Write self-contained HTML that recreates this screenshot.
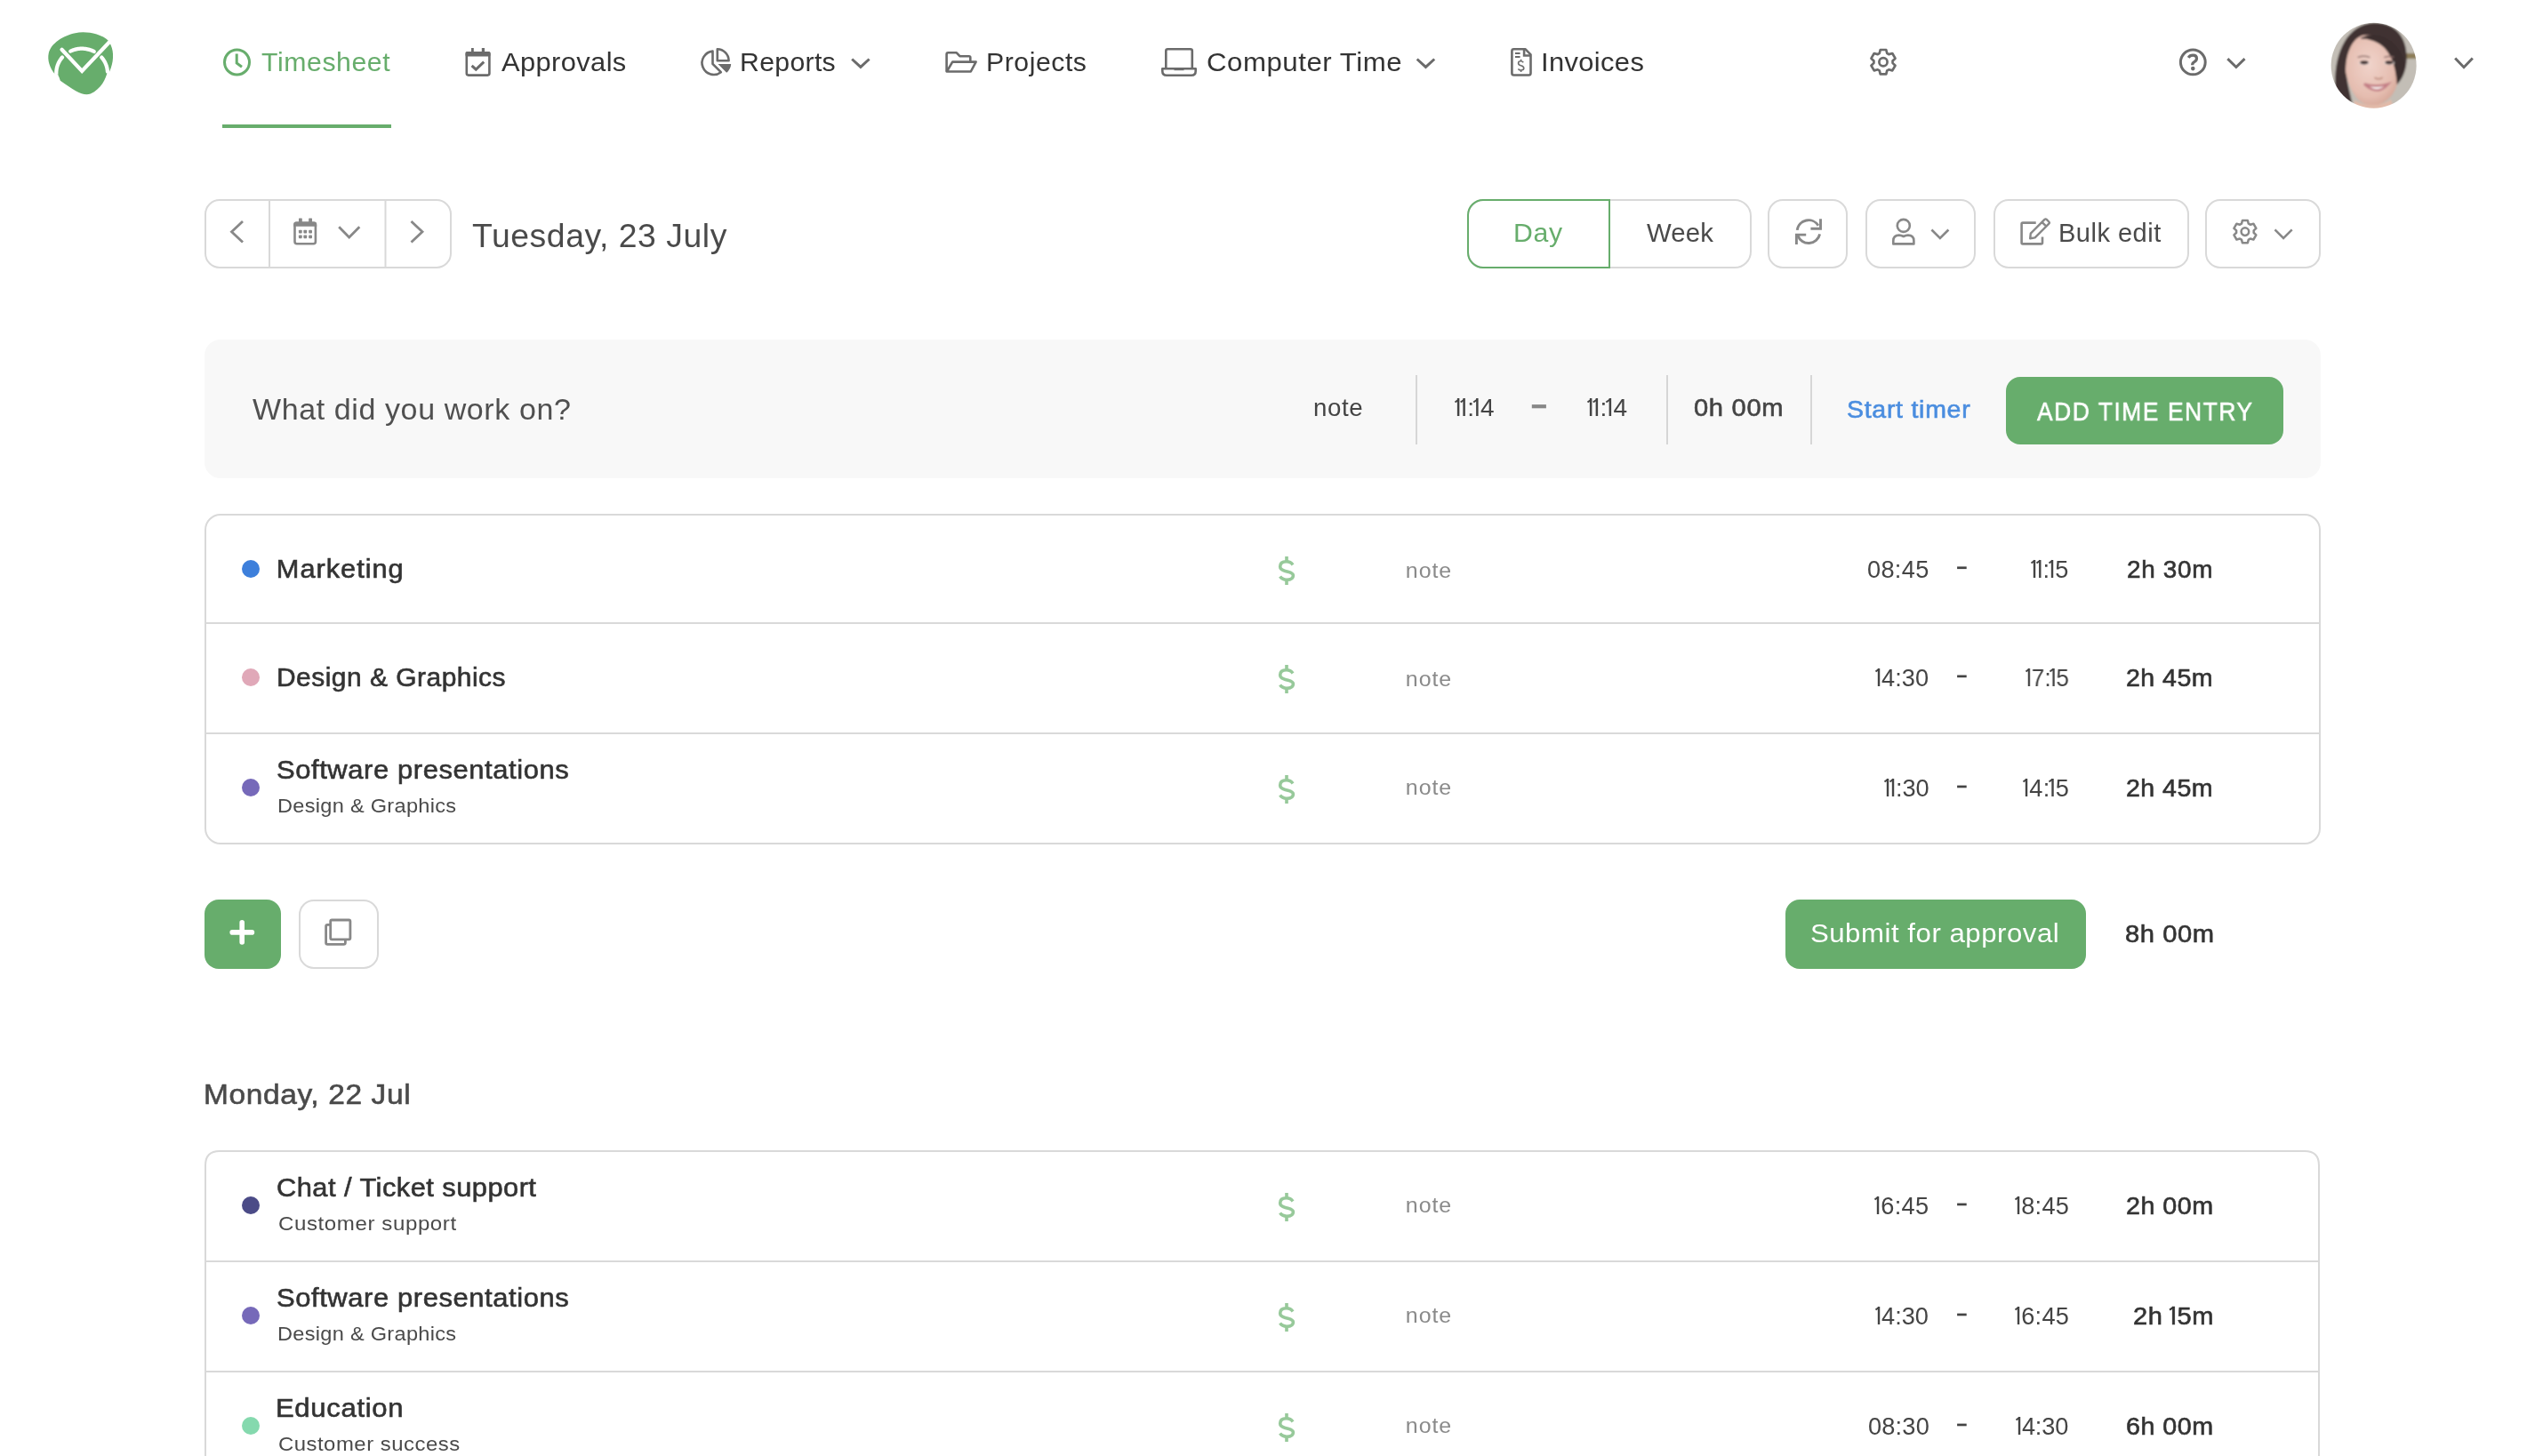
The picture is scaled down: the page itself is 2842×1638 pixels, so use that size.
<!DOCTYPE html>
<html><head><meta charset="utf-8"><title>Timesheet</title>
<style>
html,body{margin:0;padding:0;background:#fff;}
body{width:2842px;height:1638px;position:relative;overflow:hidden;font-family:"Liberation Sans",sans-serif;}
.ov{position:absolute;left:0;top:0;}
.t{position:absolute;white-space:nowrap;will-change:transform;}
.o{position:relative;}.o::after{content:'';position:absolute;left:-0.085em;top:0.185em;width:0.17em;height:0.08em;background:currentColor;transform:rotate(-36deg);transform-origin:100% 0;}
</style></head><body>
<svg class="ov" width="2842" height="1638" viewBox="0 0 2842 1638"><g transform="translate(40,20) scale(0.068681)">
<path d="M330 940 C230 830 190 690 215 580 C250 420 450 290 650 250 C800 220 1050 240 1205 385 L1235 455 C1285 560 1280 740 1210 880 L1178 880 C1150 1000 1080 1160 900 1245 C780 1290 650 1200 405 1030 C385 960 370 935 341 940 Z" fill="#67ad6c"/>
</g>
<g transform="translate(40,20) scale(0.068681)" fill="none" stroke="#fff" stroke-width="62" stroke-linecap="round"><path d="M437.3 647.9 L428.6 658.0 L420.3 668.5 L412.3 679.2 L404.8 690.1 L397.6 701.2 L390.8 712.6 L384.4 724.2 L378.4 736.0 L372.7 747.9 L367.6 760.0 L362.8 772.3 L358.4 784.7 L354.5 797.3 L351.0 809.9 L348.0 822.7 L345.4 835.5 L343.2 848.5 L341.5 861.5 L340.2 874.5 L339.4 887.6 L339.0 900.6 L339.1 913.7 L339.6 926.8 L340.6 939.9"/><path d="M570.9 547.3 L586.1 540.5 L601.4 534.2 L617.1 528.5 L632.9 523.4 L649.0 519.0 L665.2 515.1 L681.6 511.8 L698.1 509.2 L714.7 507.2 L731.4 505.9 L748.1 505.1 L764.9 505.0 L781.6 505.6 L798.3 506.8 L814.9 508.6 L831.5 511.0 L847.9 514.1 L864.2 517.7 L880.3 522.0 L896.2 526.9 L911.9 532.5 L927.4 538.5 L942.6 545.2 L957.5 552.5"/><path d="M1080.7 647.9 L1087.8 656.1 L1094.6 664.5 L1101.2 673.1 L1107.5 681.8 L1113.6 690.7 L1119.5 699.7 L1125.1 708.9 L1130.4 718.2 L1135.5 727.7 L1140.3 737.3 L1144.8 747.0 L1149.1 756.8 L1153.1 766.7 L1156.8 776.7 L1160.2 786.8 L1163.4 797.0 L1166.3 807.2 L1168.8 817.6 L1171.1 828.0 L1173.1 838.4 L1174.8 848.9 L1176.3 859.4 L1177.4 870.0 L1178.2 880.6"/><path d="M430 520 L760 872 L1240 365" stroke-linejoin="miter"/></g>
<circle cx="266.5" cy="70" r="14" fill="none" stroke="#67ad6c" stroke-width="3"/>
<path d="M266.2 60.5 V71 L272 75.2" fill="none" stroke="#67ad6c" stroke-width="3"/>
<rect x="250" y="140" width="190" height="4" fill="#67ad6c"/>
<rect x="524.8" y="59.2" width="25.6" height="25.4" rx="2" fill="none" stroke="#6b6b6b" stroke-width="2.6"/>
<rect x="523.5" y="57.9" width="28" height="5.6" rx="1.5" fill="#6b6b6b"/>
<rect x="530" y="54" width="2.8" height="5" fill="#6b6b6b"/><rect x="541.8" y="54" width="3.2" height="5" fill="#6b6b6b"/>
<path d="M530.6 73.8 L535.3 78.2 L544.2 69.6" fill="none" stroke="#6b6b6b" stroke-width="3"/>
<path d="M801.5 57.6 A13.2 13.2 0 1 0 810.8 81.2 L801.5 71.9 Z" fill="none" stroke="#6b6b6b" stroke-width="2.6" stroke-linejoin="round"/>
<path d="M806.8 55.3 A13 13 0 0 1 819.6 68.2 L806.8 68.2 Z" fill="none" stroke="#6b6b6b" stroke-width="2.6" stroke-linejoin="round"/>
<path d="M807.5 72 L822.2 72 A14.5 14.5 0 0 1 817.2 81.8 Z" fill="#6b6b6b"/>
<path d="M1064.6 80.4 V61 Q1064.6 59.3 1066.3 59.3 H1075.8 L1079.4 63.2 H1089.8 Q1091.3 63.2 1091.3 64.7 V69" fill="none" stroke="#6b6b6b" stroke-width="2.6" stroke-linejoin="round"/>
<path d="M1064.8 80.5 L1071.2 69.6 H1097.6 L1091.8 80.5 Z" fill="none" stroke="#6b6b6b" stroke-width="2.6" stroke-linejoin="round"/>
<path d="M1311.3 77 V57.2 Q1311.3 55.2 1313.3 55.2 H1338.8 Q1340.8 55.2 1340.8 57.2 V77" fill="none" stroke="#6b6b6b" stroke-width="2.6"/>
<path d="M1307.3 77.2 H1344.7 V80 Q1344.7 84.7 1340 84.7 H1312 Q1307.3 84.7 1307.3 80 Z" fill="none" stroke="#6b6b6b" stroke-width="2.6" stroke-linejoin="round"/>
<rect x="1320.5" y="77" width="11" height="2.2" fill="#6b6b6b"/>
<path d="M1715.6 55.3 H1702.5 Q1700.4 55.3 1700.4 57.4 V82.3 Q1700.4 84.5 1702.5 84.5 H1719.4 Q1721.5 84.5 1721.5 82.3 V61.3 Z" fill="none" stroke="#6b6b6b" stroke-width="2.6" stroke-linejoin="round"/>
<path d="M1714.1 55.5 V62.5 H1721.3" fill="none" stroke="#6b6b6b" stroke-width="2.6"/>
<path d="M1704 60 H1709.6 M1704 64 H1709.6" stroke="#6b6b6b" stroke-width="2"/>
<path d="M1713.3 70.3 Q1712 68.8 1710.3 68.8 Q1707.6 68.8 1707.6 71 Q1707.6 73 1710.5 73.8 Q1713.8 74.6 1713.8 76.8 Q1713.8 79 1710.6 79 Q1708.6 79 1707.4 77.4 M1710.6 66.8 V68.8 M1710.6 79 V80.9" fill="none" stroke="#6b6b6b" stroke-width="1.6"/>
<path d="M2113.73 60.00 L2114.73 55.98 L2121.27 55.98 L2122.27 60.00 A10.6 10.6 0 0 1 2124.26 61.15 L2124.26 61.15 L2128.24 60.01 L2131.51 65.67 L2128.54 68.55 A10.6 10.6 0 0 1 2128.54 70.85 L2128.54 70.85 L2131.51 73.73 L2128.24 79.39 L2124.26 78.25 A10.6 10.6 0 0 1 2122.27 79.40 L2122.27 79.40 L2121.27 83.42 L2114.73 83.42 L2113.73 79.40 A10.6 10.6 0 0 1 2111.74 78.25 L2111.74 78.25 L2107.76 79.39 L2104.49 73.73 L2107.46 70.85 A10.6 10.6 0 0 1 2107.46 68.55 L2107.46 68.55 L2104.49 65.67 L2107.76 60.01 L2111.74 61.15 A10.6 10.6 0 0 1 2113.73 60.00 Z" fill="none" stroke="#6b6b6b" stroke-width="2.7" stroke-linejoin="round"/>
<circle cx="2118" cy="69.7" r="4.6" fill="none" stroke="#6b6b6b" stroke-width="2.7"/>
<circle cx="2466.3" cy="69.9" r="13.9" fill="none" stroke="#6b6b6b" stroke-width="3"/>
<path d="M2461.2 64.8 Q2462.8 62.2 2466.3 62.2 Q2470.5 62.2 2470.5 65.8 Q2470.5 68.2 2467.8 69.6 Q2465.6 70.8 2465.6 73.2" fill="none" stroke="#6b6b6b" stroke-width="3.2"/>
<circle cx="2466.3" cy="77.1" r="2.3" fill="#6b6b6b"/>
<path d="M2505.2999999999997 66.2 L2514.8999999999996 75.5 L2524.5 66.2" fill="none" stroke="#6b6b6b" stroke-width="3" stroke-linecap="butt" stroke-linejoin="miter"/>
<path d="M958.2 66.5 L967.9 75.4 L977.5999999999999 66.5" fill="none" stroke="#6b6b6b" stroke-width="3" stroke-linecap="butt" stroke-linejoin="miter"/>
<path d="M1593.7 66.5 L1603.45 75.4 L1613.2 66.5" fill="none" stroke="#6b6b6b" stroke-width="3" stroke-linecap="butt" stroke-linejoin="miter"/>
<path d="M2761.2 65.5 L2771.0 75.7 L2780.8 65.5" fill="none" stroke="#6b6b6b" stroke-width="3" stroke-linecap="butt" stroke-linejoin="miter"/>
<defs><clipPath id="av"><circle cx="749" cy="725" r="624"/></clipPath>
<filter id="blr" x="-10%" y="-10%" width="120%" height="120%"><feGaussianBlur stdDeviation="12"/></filter>
<radialGradient id="sk" cx="0.45" cy="0.42" r="0.65"><stop offset="0" stop-color="#f0d3ca"/><stop offset="0.7" stop-color="#e5bdb0"/><stop offset="1" stop-color="#d3a394"/></radialGradient></defs>
<g transform="translate(2612,18) scale(0.076923)"><g clip-path="url(#av)"><g filter="url(#blr)">
<rect x="50" y="50" width="1400" height="1400" fill="#c3beb6"/>
<rect x="1190" y="545" width="250" height="80" fill="#8d7d58"/>
<path d="M190 1100 C150 600 330 130 740 100 C1080 85 1250 330 1230 650 C1220 820 1160 930 1090 1000 L1080 700 C1000 450 800 330 560 320 C420 420 340 620 350 850 C370 1050 430 1200 460 1420 L230 1420 C210 1300 200 1200 190 1100 Z" fill="#3f3131"/>
<path d="M340 830 C330 520 460 290 620 280 C860 265 1040 420 1100 640 C1130 820 1120 1010 1020 1150 C920 1275 810 1315 705 1305 C540 1290 420 1160 340 830 Z" fill="url(#sk)"/>
<path d="M470 1230 C600 1330 860 1330 1000 1220 L1060 1420 L450 1420 Z" fill="#e2baa9"/>
<path d="M560 320 C820 200 1090 360 1180 620 C1220 800 1160 920 1090 1000 C1075 820 1045 620 910 470 C810 370 680 330 560 330 Z" fill="#3a2d2e"/>
<path d="M515 605 Q600 570 695 605" stroke="#8a6a66" stroke-width="18" fill="none"/>
<path d="M900 605 Q975 578 1045 605" stroke="#8a6a66" stroke-width="18" fill="none"/>
<ellipse cx="610" cy="685" rx="78" ry="30" fill="#f1e6e4"/><ellipse cx="975" cy="685" rx="76" ry="30" fill="#f1e6e4"/>
<ellipse cx="610" cy="680" rx="62" ry="28" fill="#3a2a2a"/><ellipse cx="975" cy="680" rx="60" ry="28" fill="#3a2a2a"/>
<path d="M760 900 Q820 940 880 900" stroke="#c08f80" stroke-width="22" fill="none"/>
<path d="M610 995 Q790 1050 960 995 Q800 1175 610 995 Z" fill="#fbf5f3" stroke="#c47f86" stroke-width="34"/>
</g></g></g>
<rect x="231.0" y="225.0" width="276" height="76" rx="16" fill="none" stroke="#d9d9d9" stroke-width="2"/>
<rect x="302" y="225" width="2" height="76" fill="#d9d9d9"/><rect x="432.5" y="225" width="2" height="76" fill="#d9d9d9"/>
<path d="M273 249 L260.5 260.8 L273 272.6" fill="none" stroke="#888888" stroke-width="2.8"/>
<path d="M462.5 249 L475 260.8 L462.5 272.6" fill="none" stroke="#888888" stroke-width="2.8"/>
<rect x="331.5" y="250.8" width="23.4" height="23.5" rx="2.5" fill="none" stroke="#888888" stroke-width="2.6"/><path d="M330.2 254.8 V252 Q330.2 249.5 332.7 249.5 H353.7 Q356.2 249.5 356.2 252 V254.8 Z" fill="#888888"/>
<rect x="336" y="245.5" width="3.8" height="5" rx="0.6" fill="#888888"/><rect x="347.2" y="245.5" width="3.8" height="5" rx="0.6" fill="#888888"/>
<rect x="335.90000000000003" y="258.70000000000005" width="3.8" height="3.8" rx="0.9" fill="#888888"/>
<rect x="335.90000000000003" y="264.40000000000003" width="3.8" height="3.8" rx="0.9" fill="#888888"/>
<rect x="341.40000000000003" y="258.70000000000005" width="3.8" height="3.8" rx="0.9" fill="#888888"/>
<rect x="341.40000000000003" y="264.40000000000003" width="3.8" height="3.8" rx="0.9" fill="#888888"/>
<rect x="347.20000000000005" y="258.70000000000005" width="3.8" height="3.8" rx="0.9" fill="#888888"/>
<rect x="347.20000000000005" y="264.40000000000003" width="3.8" height="3.8" rx="0.9" fill="#888888"/>
<path d="M381.2 255.2 L392.7 267 L404.3 255.2" fill="none" stroke="#888888" stroke-width="2.8"/>
<rect x="1651.0" y="225.0" width="318" height="76" rx="18" fill="none" stroke="#d9d9d9" stroke-width="2"/>
<path d="M1810 225 H1668 A17 17 0 0 0 1651 242 V284 A17 17 0 0 0 1668 301 H1810 Z" fill="none" stroke="#67ad6c" stroke-width="2"/>
<rect x="1989.0" y="225.0" width="88" height="76" rx="16" fill="none" stroke="#d9d9d9" stroke-width="2"/>
<path d="M2021.23 258.85 A12.9 12.9 0 0 1 2044.94 253.81" fill="none" stroke="#888888" stroke-width="2.9"/>
<path d="M2047.5 246.2 V257.3 H2036.4" fill="none" stroke="#888888" stroke-width="2.9"/>
<path d="M2046.62 263.33 A12.9 12.9 0 0 1 2021.88 265.06" fill="none" stroke="#888888" stroke-width="2.9"/>
<path d="M2020.4 275 V264.1 H2031.2" fill="none" stroke="#888888" stroke-width="2.9"/>
<rect x="2099.0" y="225.0" width="122" height="76" rx="16" fill="none" stroke="#d9d9d9" stroke-width="2"/>
<circle cx="2140.8" cy="253.9" r="7" fill="none" stroke="#888888" stroke-width="2.6"/>
<path d="M2129.3 274.4 V271 Q2129.3 264.6 2135.8 264.6 Q2138.3 264.6 2140.8 266 Q2143.3 264.6 2145.8 264.6 Q2152.4 264.6 2152.4 271 V274.4 Z" fill="none" stroke="#888888" stroke-width="2.6" stroke-linejoin="round"/>
<path d="M2172.4 258.5 L2181.9 268 L2191.4 258.5" fill="none" stroke="#888888" stroke-width="2.6"/>
<rect x="2243.0" y="225.0" width="218" height="76" rx="16" fill="none" stroke="#d9d9d9" stroke-width="2"/>
<path d="M2289.7 250.6 H2275 Q2273.6 250.6 2273.6 252 V273 Q2273.6 274.4 2275 274.4 H2295.6 Q2297 274.4 2297 273 V266.5" fill="none" stroke="#888888" stroke-width="2.6"/>
<path d="M2283.8 262.6 L2299.5 246.9 Q2300.6 245.8 2301.7 246.9 L2304.3 249.5 Q2305.4 250.6 2304.3 251.7 L2288.6 267.4 L2283.2 268.2 Z M2296.5 249.9 L2301.3 254.7" fill="none" stroke="#888888" stroke-width="2.4" stroke-linejoin="round"/>
<rect x="2481.0" y="225.0" width="128" height="76" rx="16" fill="none" stroke="#d9d9d9" stroke-width="2"/>
<path d="M2521.01 251.61 L2521.93 247.94 L2527.87 247.94 L2528.79 251.61 A9.8 9.8 0 0 1 2530.74 252.73 L2530.74 252.73 L2534.37 251.70 L2537.35 256.85 L2534.63 259.47 A9.8 9.8 0 0 1 2534.63 261.73 L2534.63 261.73 L2537.35 264.35 L2534.37 269.50 L2530.74 268.47 A9.8 9.8 0 0 1 2528.79 269.59 L2528.79 269.59 L2527.87 273.26 L2521.93 273.26 L2521.01 269.59 A9.8 9.8 0 0 1 2519.06 268.47 L2519.06 268.47 L2515.43 269.50 L2512.45 264.35 L2515.17 261.73 A9.8 9.8 0 0 1 2515.17 259.47 L2515.17 259.47 L2512.45 256.85 L2515.43 251.70 L2519.06 252.73 A9.8 9.8 0 0 1 2521.01 251.61 Z" fill="none" stroke="#888888" stroke-width="2.5" stroke-linejoin="round"/>
<circle cx="2524.9" cy="260.6" r="4.3" fill="none" stroke="#888888" stroke-width="2.5"/>
<path d="M2558.5 258.3 L2568.1 267.9 L2577.7 258.3" fill="none" stroke="#888888" stroke-width="2.6"/>
<rect x="230" y="382" width="2380" height="156" rx="18" fill="#f8f8f8"/>
<rect x="1592" y="422" width="2" height="78" fill="#d6d6d6"/>
<rect x="1874" y="422" width="2" height="78" fill="#d6d6d6"/>
<rect x="2036" y="422" width="2" height="78" fill="#d6d6d6"/>
<rect x="1722.8" y="455.1" width="16.1" height="4.2" fill="#888"/>
<rect x="2256" y="424" width="312" height="76" rx="16" fill="#67ad6c"/>
<rect x="231.0" y="579.0" width="2378" height="370" rx="17" fill="none" stroke="#d9d9d9" stroke-width="2"/>
<rect x="231" y="700" width="2378" height="2" fill="#d9d9d9"/>
<rect x="231" y="824" width="2378" height="2" fill="#d9d9d9"/>
<circle cx="282" cy="640.0" r="10" fill="#3d7fdb"/>
<path d="M1454 635.4 Q1451.6 631.8 1446.8 631.8 Q1439.7 631.8 1439.7 637.4 Q1439.7 640.8 1445.5 642.4 L1448.5 643.2 Q1454.4 644.8 1454.4 647.4 Q1454.4 652.2 1447 652.2 Q1442 652.2 1439.6 648.6" fill="none" stroke="#97c99a" stroke-width="3.6"/>
<rect x="1445.2" y="626.0" width="3.6" height="6" fill="#97c99a"/><rect x="1445.2" y="652.0" width="3.6" height="6" fill="#97c99a"/>
<circle cx="282" cy="762.0" r="10" fill="#e0a8b8"/>
<path d="M1454 757.4 Q1451.6 753.8 1446.8 753.8 Q1439.7 753.8 1439.7 759.4 Q1439.7 762.8 1445.5 764.4 L1448.5 765.2 Q1454.4 766.8 1454.4 769.4 Q1454.4 774.2 1447 774.2 Q1442 774.2 1439.6 770.6" fill="none" stroke="#97c99a" stroke-width="3.6"/>
<rect x="1445.2" y="748.0" width="3.6" height="6" fill="#97c99a"/><rect x="1445.2" y="774.0" width="3.6" height="6" fill="#97c99a"/>
<circle cx="282" cy="886.0" r="10" fill="#7669b9"/>
<path d="M1454 881.4 Q1451.6 877.8 1446.8 877.8 Q1439.7 877.8 1439.7 883.4 Q1439.7 886.8 1445.5 888.4 L1448.5 889.2 Q1454.4 890.8 1454.4 893.4 Q1454.4 898.2 1447 898.2 Q1442 898.2 1439.6 894.6" fill="none" stroke="#97c99a" stroke-width="3.6"/>
<rect x="1445.2" y="872.0" width="3.6" height="6" fill="#97c99a"/><rect x="1445.2" y="898.0" width="3.6" height="6" fill="#97c99a"/>
<rect x="2201.1" y="637.4" width="10.6" height="2.7" fill="#444"/>
<rect x="2201.1" y="759.5" width="10.6" height="2.7" fill="#444"/>
<rect x="2201.1" y="883.6" width="10.6" height="2.7" fill="#444"/>
<path d="M231 1640 V1311 Q231 1295 247 1295 H2592 Q2608 1295 2608 1311 V1640" fill="none" stroke="#d9d9d9" stroke-width="2"/>
<rect x="231" y="1418" width="2378" height="2" fill="#d9d9d9"/>
<rect x="231" y="1542" width="2378" height="2" fill="#d9d9d9"/>
<circle cx="282" cy="1356.0" r="10" fill="#4b4b87"/>
<path d="M1454 1351.4 Q1451.6 1347.8 1446.8 1347.8 Q1439.7 1347.8 1439.7 1353.4 Q1439.7 1356.8 1445.5 1358.4 L1448.5 1359.2 Q1454.4 1360.8 1454.4 1363.4 Q1454.4 1368.2 1447 1368.2 Q1442 1368.2 1439.6 1364.6" fill="none" stroke="#97c99a" stroke-width="3.6"/>
<rect x="1445.2" y="1342.0" width="3.6" height="6" fill="#97c99a"/><rect x="1445.2" y="1368.0" width="3.6" height="6" fill="#97c99a"/>
<circle cx="282" cy="1480.0" r="10" fill="#7669b9"/>
<path d="M1454 1475.4 Q1451.6 1471.8 1446.8 1471.8 Q1439.7 1471.8 1439.7 1477.4 Q1439.7 1480.8 1445.5 1482.4 L1448.5 1483.2 Q1454.4 1484.8 1454.4 1487.4 Q1454.4 1492.2 1447 1492.2 Q1442 1492.2 1439.6 1488.6" fill="none" stroke="#97c99a" stroke-width="3.6"/>
<rect x="1445.2" y="1466.0" width="3.6" height="6" fill="#97c99a"/><rect x="1445.2" y="1492.0" width="3.6" height="6" fill="#97c99a"/>
<circle cx="282" cy="1604.0" r="10" fill="#85d9ae"/>
<path d="M1454 1599.4 Q1451.6 1595.8 1446.8 1595.8 Q1439.7 1595.8 1439.7 1601.4 Q1439.7 1604.8 1445.5 1606.4 L1448.5 1607.2 Q1454.4 1608.8 1454.4 1611.4 Q1454.4 1616.2 1447 1616.2 Q1442 1616.2 1439.6 1612.6" fill="none" stroke="#97c99a" stroke-width="3.6"/>
<rect x="1445.2" y="1590.0" width="3.6" height="6" fill="#97c99a"/><rect x="1445.2" y="1616.0" width="3.6" height="6" fill="#97c99a"/>
<rect x="2201.1" y="1353.6" width="10.6" height="2.7" fill="#444"/>
<rect x="2201.1" y="1477.6" width="10.6" height="2.7" fill="#444"/>
<rect x="2201.1" y="1601.6" width="10.6" height="2.7" fill="#444"/>
<rect x="230" y="1012" width="86" height="78" rx="16" fill="#67ad6c"/>
<path d="M272.2 1037.8 V1060 M261.2 1048.9 H283.4" stroke="#fff" stroke-width="5.6" stroke-linecap="round"/>
<rect x="337.0" y="1013.0" width="88" height="76" rx="16" fill="none" stroke="#d9d9d9" stroke-width="2"/>
<rect x="371.7" y="1035" width="22.2" height="21.8" rx="1.5" fill="none" stroke="#888888" stroke-width="2.8"/>
<path d="M371.5 1040.4 H368.4 Q366.6 1040.4 366.6 1042.2 V1060.6 Q366.6 1062.4 368.4 1062.4 H386.6 Q388.4 1062.4 388.4 1060.6 V1057.6" fill="none" stroke="#888888" stroke-width="2.8"/>
<rect x="2008" y="1012" width="338" height="78" rx="16" fill="#67ad6c"/></svg>
<div class="t" style="left:293.80px;top:54.90px;font-size:30.233px;line-height:30.233px;letter-spacing:0.587px;color:#67ad6c">Timesheet</div><div class="t" style="left:564.30px;top:54.90px;font-size:30.233px;line-height:30.233px;letter-spacing:0.361px;color:#333333;transform:scaleX(1.0222);transform-origin:0.00px 0">Approvals</div><div class="t" style="left:832.40px;top:54.90px;font-size:30.233px;line-height:30.233px;letter-spacing:0.317px;color:#333333">Reports</div><div class="t" style="left:1109.20px;top:54.90px;font-size:30.233px;line-height:30.233px;letter-spacing:0.543px;color:#333333">Projects</div><div class="t" style="left:1356.70px;top:54.90px;font-size:30.233px;line-height:30.233px;letter-spacing:0.525px;color:#333333;transform:scaleX(1.0320);transform-origin:2.00px 0">Computer Time</div><div class="t" style="left:1732.80px;top:54.90px;font-size:30.233px;line-height:30.233px;letter-spacing:0.349px;color:#333333;transform:scaleX(1.0234);transform-origin:3.00px 0">Invoices</div><div class="t" style="left:530.70px;top:247.15px;font-size:37.355px;line-height:37.355px;letter-spacing:0.547px;color:#4a4a4a">Tuesday, 23 July</div><div class="t" style="left:1701.90px;top:247.10px;font-size:29.361px;line-height:29.361px;letter-spacing:0.705px;color:#67ad6c;transform:scaleX(1.0290);transform-origin:2.00px 0">Day</div><div class="t" style="left:1851.90px;top:247.10px;font-size:29.361px;line-height:29.361px;letter-spacing:0.133px;color:#4a4a4a">Week</div><div class="t" style="left:2315.20px;top:247.90px;font-size:29.070px;line-height:29.070px;letter-spacing:0.475px;color:#4a4a4a">Bulk edit</div><div class="t" style="left:284.20px;top:443.20px;font-size:34.012px;line-height:34.012px;letter-spacing:0.600px;color:#505050">What did you work on?</div><div class="t" style="left:1476.70px;top:445.00px;font-size:27.635px;line-height:27.635px;letter-spacing:0.600px;color:#444444">note</div><div class="t" style="left:1637.20px;top:446.05px;font-size:26.890px;line-height:26.890px;letter-spacing:0.373px;color:#444444;transform:scaleX(1.0378);transform-origin:-1.00px 0"><span class="o">l</span><span class="o">l</span>:<span class="o">l</span>4</div><div class="t" style="left:1786.30px;top:446.05px;font-size:26.890px;line-height:26.890px;letter-spacing:0.443px;color:#444444;transform:scaleX(1.0451);transform-origin:-1.00px 0"><span class="o">l</span><span class="o">l</span>:<span class="o">l</span>4</div><div class="t" style="left:1905.00px;top:445.15px;font-size:28.053px;line-height:28.053px;letter-spacing:0.674px;color:#444444;-webkit-text-stroke:0.6px #444444;transform:scaleX(1.0385);transform-origin:1.00px 0">0h 00m</div><div class="t" style="left:2077.10px;top:448.35px;font-size:26.890px;line-height:26.890px;letter-spacing:0.694px;color:#4a8ddf;-webkit-text-stroke:0.6px #4a8ddf;transform:scaleX(1.0598);transform-origin:1.00px 0">Start timer</div><div class="t" style="left:2290.90px;top:447.50px;font-size:29.942px;line-height:29.942px;letter-spacing:1.794px;color:#ffffff;-webkit-text-stroke:0.6px #ffffff;transform:scaleX(0.8800);transform-origin:0.00px 0">ADD TIME ENTRY</div><div class="t" style="left:310.80px;top:626.15px;font-size:28.925px;line-height:28.925px;letter-spacing:0.917px;color:#333333;-webkit-text-stroke:0.6px #333333;transform:scaleX(1.0634);transform-origin:2.00px 0">Marketing</div><div class="t" style="left:1580.60px;top:631.20px;font-size:23.471px;line-height:23.471px;letter-spacing:0.847px;color:#8a8a8a;transform:scaleX(1.0628);transform-origin:2.00px 0">note</div><div class="t" style="left:2100.00px;top:627.05px;font-size:27.181px;line-height:27.181px;letter-spacing:0.325px;color:#444444">08:45</div><div class="t" style="left:2285.20px;top:627.05px;font-size:27.181px;line-height:27.181px;letter-spacing:0.150px;color:#444444"><span class="o">l</span><span class="o">l</span>:<span class="o">l</span>5</div><div class="t" style="left:2392.10px;top:626.80px;font-size:27.907px;line-height:27.907px;letter-spacing:0.700px;color:#333333;-webkit-text-stroke:0.6px #333333">2h 30m</div><div class="t" style="left:310.80px;top:748.25px;font-size:28.925px;line-height:28.925px;letter-spacing:0.498px;color:#333333;-webkit-text-stroke:0.6px #333333;transform:scaleX(1.0347);transform-origin:2.00px 0">Design &amp; Graphics</div><div class="t" style="left:1580.60px;top:753.30px;font-size:23.471px;line-height:23.471px;letter-spacing:0.847px;color:#8a8a8a;transform:scaleX(1.0628);transform-origin:2.00px 0">note</div><div class="t" style="left:2110.20px;top:749.15px;font-size:27.181px;line-height:27.181px;letter-spacing:0.025px;color:#444444"><span class="o">l</span>4:30</div><div class="t" style="left:2278.70px;top:749.15px;font-size:27.181px;line-height:27.181px;letter-spacing:0.000px;color:#444444;transform:scaleX(0.9620);transform-origin:-1.00px 0"><span class="o">l</span>7:<span class="o">l</span>5</div><div class="t" style="left:2391.00px;top:748.90px;font-size:27.907px;line-height:27.907px;letter-spacing:0.449px;color:#333333;-webkit-text-stroke:0.6px #333333;transform:scaleX(1.0253);transform-origin:1.00px 0">2h 45m</div><div class="t" style="left:310.90px;top:851.05px;font-size:29.797px;line-height:29.797px;letter-spacing:0.554px;color:#333333;-webkit-text-stroke:0.6px #333333;transform:scaleX(1.0399);transform-origin:1.00px 0">Software presentations</div><div class="t" style="left:312.10px;top:894.70px;font-size:22.966px;line-height:22.966px;letter-spacing:0.296px;color:#4a4a4a;transform:scaleX(1.0257);transform-origin:2.00px 0">Design &amp; Graphics</div><div class="t" style="left:1580.60px;top:875.00px;font-size:23.471px;line-height:23.471px;letter-spacing:0.847px;color:#8a8a8a;transform:scaleX(1.0628);transform-origin:2.00px 0">note</div><div class="t" style="left:2119.50px;top:873.25px;font-size:27.181px;line-height:27.181px;letter-spacing:-0.050px;color:#444444"><span class="o">l</span><span class="o">l</span>:30</div><div class="t" style="left:2275.80px;top:873.25px;font-size:27.181px;line-height:27.181px;letter-spacing:0.250px;color:#444444"><span class="o">l</span>4:<span class="o">l</span>5</div><div class="t" style="left:2391.00px;top:873.00px;font-size:27.907px;line-height:27.907px;letter-spacing:0.449px;color:#333333;-webkit-text-stroke:0.6px #333333;transform:scaleX(1.0253);transform-origin:1.00px 0">2h 45m</div><div class="t" style="left:2036.00px;top:1035.15px;font-size:30.088px;line-height:30.088px;letter-spacing:0.506px;color:#ffffff;transform:scaleX(1.0368);transform-origin:2.00px 0">Submit for approval</div><div class="t" style="left:2389.60px;top:1036.25px;font-size:28.344px;line-height:28.344px;letter-spacing:0.525px;color:#333333;-webkit-text-stroke:0.6px #333333;transform:scaleX(1.0293);transform-origin:1.00px 0">8h 00m</div><div class="t" style="left:228.90px;top:1214.70px;font-size:32.268px;line-height:32.268px;letter-spacing:0.604px;color:#4a4a4a;-webkit-text-stroke:0.6px #4a4a4a;transform:scaleX(1.0383);transform-origin:2.00px 0">Monday, 22 Jul</div><div class="t" style="left:310.90px;top:1321.05px;font-size:29.797px;line-height:29.797px;letter-spacing:0.454px;color:#333333;-webkit-text-stroke:0.6px #333333;transform:scaleX(1.0346);transform-origin:1.00px 0">Chat / Ticket support</div><div class="t" style="left:313.10px;top:1364.70px;font-size:22.966px;line-height:22.966px;letter-spacing:0.562px;color:#4a4a4a;transform:scaleX(1.0489);transform-origin:1.00px 0">Customer support</div><div class="t" style="left:1580.60px;top:1345.00px;font-size:23.471px;line-height:23.471px;letter-spacing:0.847px;color:#8a8a8a;transform:scaleX(1.0628);transform-origin:2.00px 0">note</div><div class="t" style="left:2109.20px;top:1343.25px;font-size:27.181px;line-height:27.181px;letter-spacing:0.275px;color:#444444"><span class="o">l</span>6:45</div><div class="t" style="left:2266.90px;top:1343.25px;font-size:27.181px;line-height:27.181px;letter-spacing:0.225px;color:#444444"><span class="o">l</span>8:45</div><div class="t" style="left:2390.50px;top:1343.00px;font-size:27.907px;line-height:27.907px;letter-spacing:0.496px;color:#333333;-webkit-text-stroke:0.6px #333333;transform:scaleX(1.0280);transform-origin:1.00px 0">2h 00m</div><div class="t" style="left:310.90px;top:1445.05px;font-size:29.797px;line-height:29.797px;letter-spacing:0.554px;color:#333333;-webkit-text-stroke:0.6px #333333;transform:scaleX(1.0399);transform-origin:1.00px 0">Software presentations</div><div class="t" style="left:312.10px;top:1488.70px;font-size:22.966px;line-height:22.966px;letter-spacing:0.296px;color:#4a4a4a;transform:scaleX(1.0257);transform-origin:2.00px 0">Design &amp; Graphics</div><div class="t" style="left:1580.60px;top:1469.00px;font-size:23.471px;line-height:23.471px;letter-spacing:0.847px;color:#8a8a8a;transform:scaleX(1.0628);transform-origin:2.00px 0">note</div><div class="t" style="left:2110.30px;top:1467.25px;font-size:27.181px;line-height:27.181px;letter-spacing:0.000px;color:#444444"><span class="o">l</span>4:30</div><div class="t" style="left:2266.90px;top:1467.25px;font-size:27.181px;line-height:27.181px;letter-spacing:0.225px;color:#444444"><span class="o">l</span>6:45</div><div class="t" style="left:2399.00px;top:1467.00px;font-size:27.907px;line-height:27.907px;letter-spacing:0.634px;color:#333333;-webkit-text-stroke:0.6px #333333;transform:scaleX(1.0407);transform-origin:1.00px 0">2h <span class="o">l</span>5m</div><div class="t" style="left:309.90px;top:1569.05px;font-size:29.797px;line-height:29.797px;letter-spacing:0.665px;color:#333333;-webkit-text-stroke:0.6px #333333;transform:scaleX(1.0430);transform-origin:2.00px 0">Education</div><div class="t" style="left:313.10px;top:1612.70px;font-size:22.966px;line-height:22.966px;letter-spacing:0.490px;color:#4a4a4a;transform:scaleX(1.0409);transform-origin:1.00px 0">Customer success</div><div class="t" style="left:1580.60px;top:1593.00px;font-size:23.471px;line-height:23.471px;letter-spacing:0.847px;color:#8a8a8a;transform:scaleX(1.0628);transform-origin:2.00px 0">note</div><div class="t" style="left:2100.50px;top:1591.25px;font-size:27.181px;line-height:27.181px;letter-spacing:0.200px;color:#444444">08:30</div><div class="t" style="left:2268.40px;top:1591.25px;font-size:27.181px;line-height:27.181px;letter-spacing:-0.150px;color:#444444"><span class="o">l</span>4:30</div><div class="t" style="left:2390.50px;top:1591.00px;font-size:27.907px;line-height:27.907px;letter-spacing:0.496px;color:#333333;-webkit-text-stroke:0.6px #333333;transform:scaleX(1.0280);transform-origin:1.00px 0">6h 00m</div>
</body></html>
